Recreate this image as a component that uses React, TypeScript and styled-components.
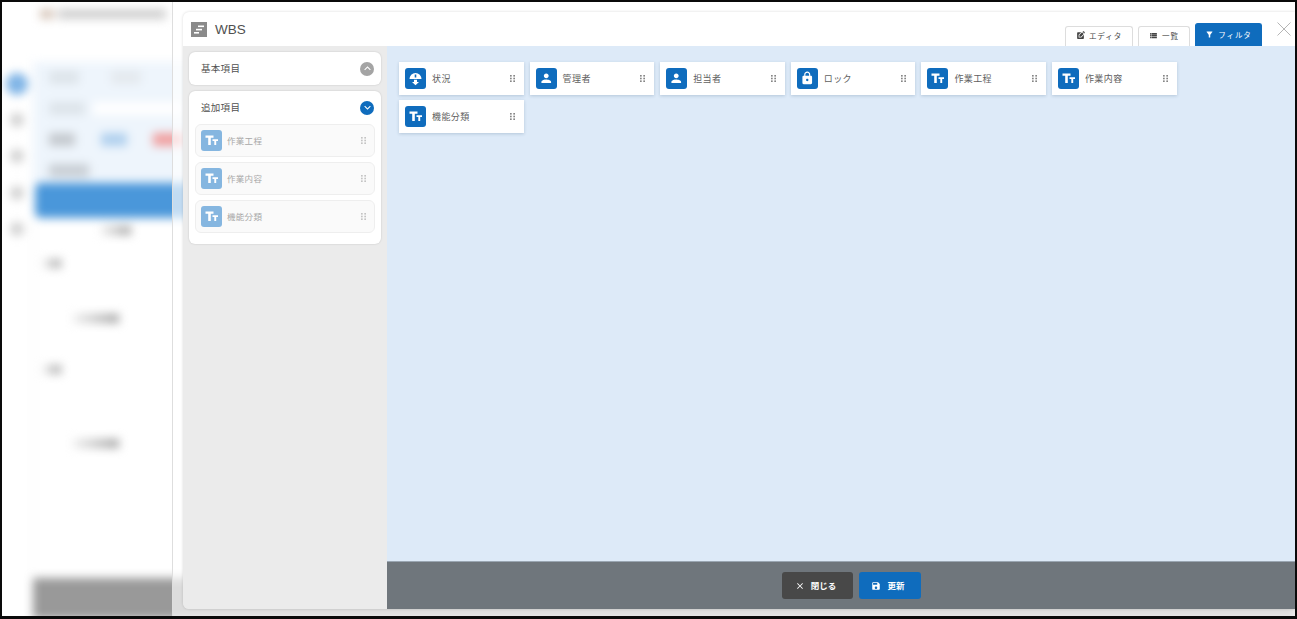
import React from "react";
import styled, { createGlobalStyle } from "styled-components";
import {
  MdPerson,
  MdLock,
  MdKeyboardArrowUp,
  MdKeyboardArrowDown,
  MdFilterAlt,
  MdClose,
  MdSave,
  MdEditSquare,
  MdViewList,
} from "react-icons/md";

const Global = createGlobalStyle`
  html, body { margin: 0; padding: 0; background: #fff; }
  body { font-family: "Noto Sans CJK JP", "Noto Sans", sans-serif; }
  * { box-sizing: border-box; }
`;

const Frame = styled.div`
  position: relative;
  width: 1297px;
  height: 619px;
  overflow: hidden;
  background: #fff;
  &::after {
    content: "";
    position: absolute;
    inset: 0;
    border: 2px solid #0a0a0a;
    border-bottom-width: 3px;
    pointer-events: none;
  }
`;

/* blurred page behind the drawer */
const Backdrop = styled.div`
  display: flex;
  height: 100%;
  filter: blur(5px);
`;

const Rail = styled.div`
  width: 33px;
  flex: none;
  display: flex;
  flex-direction: column;
  align-items: center;
  gap: 22.5px;
  padding-top: 73px;
`;

const RailDot = styled.div<{ $active?: boolean }>`
  width: ${({ $active }) => ($active ? "22px" : "14px")};
  height: ${({ $active }) => ($active ? "22px" : "14px")};
  margin-bottom: ${({ $active }) => ($active ? "-5px" : "0")};
  border-radius: 50%;
  background: ${({ $active }) => ($active ? "#7fb4e6" : "#d0d0d0")};
`;

const PageMain = styled.div`
  flex: 1;
  display: flex;
  flex-direction: column;
`;

const PageTitle = styled.div`
  height: 62px;
  padding: 9px 0 0 7px;
  display: flex;
  gap: 4px;
`;

const TitleBlob = styled.div<{ $w: number; $c: string }>`
  width: ${({ $w }) => $w}px;
  height: 10px;
  background: ${({ $c }) => $c};
`;

const FilterArea = styled.div`
  height: 121px;
  background: #eef5fc;
  display: flex;
  flex-direction: column;
  gap: 18px;
  padding: 9px 0 0 16px;
`;

const BlobRow = styled.div<{ $gap: number }>`
  display: flex;
  gap: ${({ $gap }) => $gap}px;
  align-items: center;
`;

const Blob = styled.div<{ $w: number; $c: string }>`
  width: ${({ $w }) => $w}px;
  height: 13px;
  flex: none;
  background: ${({ $c }) => $c};
`;

const TableHead = styled.div`
  height: 35px;
  margin-left: 2px;
  background: #4a97da;
  border-radius: 5px 0 0 5px;
`;

const TableBody = styled.div`
  flex: 1;
  display: flex;
  flex-direction: column;
  padding-left: 7px;
  border-left: 1px solid #f0f0f0;
`;

const CellBlob = styled.div<{ $top: number; $x: number; $w: number }>`
  width: ${({ $w }) => $w}px;
  height: 9px;
  margin-top: ${({ $top }) => $top}px;
  margin-left: ${({ $x }) => $x}px;
  background: linear-gradient(90deg, #f0f0f0, #a0a0a0);
`;

const PageFooter = styled.div`
  height: 41px;
  background: #999;
`;

const Drawer = styled.div`
  position: absolute;
  top: 0;
  right: 0;
  bottom: 0;
  left: 172px;
  padding: 12px 2px 10px 10px;
  background: rgba(255, 255, 255, 0.66);
  border-left: 1px solid #dedede;
`;

const Modal = styled.div`
  height: 100%;
  display: flex;
  flex-direction: column;
  border-radius: 6px 0 0 6px;
  overflow: hidden;
  background: #ebebeb;
  box-shadow: 0 0 3px rgba(0, 0, 0, 0.15);
`;

const Header = styled.header`
  height: 34px;
  flex: none;
  position: relative;
  display: flex;
  align-items: center;
  padding-left: 8px;
  background: #fff;
`;

const HeaderIcon = styled.svg`
  width: 16px;
  height: 15px;
  margin-right: 8px;
`;

const Title = styled.h1`
  margin: 0;
  font: 400 13.5px "Liberation Sans", sans-serif;
  color: #505050;
`;

const Tabs = styled.div`
  margin-left: auto;
  align-self: flex-end;
  display: flex;
  align-items: flex-end;
  gap: 5px;
  margin-right: 33px;
`;

const Tab = styled.div<{ $active?: boolean; $w: number }>`
  width: ${({ $w }) => $w}px;
  height: ${({ $active }) => ($active ? "23px" : "20px")};
  display: flex;
  align-items: center;
  justify-content: center;
  gap: 4px;
  padding-bottom: 2px;
  font-size: 7.5px;
  letter-spacing: 0.9px;
  border-radius: 3px 3px 0 0;
  color: ${({ $active }) => ($active ? "#fff" : "#444")};
  background: ${({ $active }) => ($active ? "#0f6cbd" : "#fff")};
  border: 1px solid ${({ $active }) => ($active ? "#0f6cbd" : "#ddd")};
  border-bottom: none;
  svg {
    font-size: 9px;
  }
`;

const CloseButton = styled.svg`
  position: absolute;
  top: 10px;
  right: 4px;
  width: 14px;
  height: 14px;
`;

const Body = styled.div`
  flex: 1;
  display: flex;
  min-height: 0;
`;

const Side = styled.aside`
  width: 204px;
  flex: none;
  display: flex;
  flex-direction: column;
  gap: 6px;
  padding: 6px 6px 0;
  background: #ebebeb;
`;

const Card = styled.section`
  background: #fff;
  border-radius: 6px;
  box-shadow: 0 0 2px rgba(0, 0, 0, 0.18);
`;

const CardHead = styled.div`
  height: 33px;
  display: flex;
  align-items: center;
  justify-content: space-between;
  padding: 0 7px 0 12px;
  font-size: 9.5px;
  letter-spacing: 0.3px;
  color: #505050;
`;

const Label = styled.span<{ $lift?: number }>`
  margin-top: ${({ $lift }) => -($lift ?? 2)}px;
`;

const Toggle = styled.span<{ $open?: boolean }>`
  width: 14px;
  height: 14px;
  border-radius: 50%;
  display: flex;
  align-items: center;
  justify-content: center;
  color: #fff;
  font-size: 13px;
  background: ${({ $open }) => ($open ? "#0f6cbd" : "#a4a4a4")};
`;

const SideList = styled.div`
  display: flex;
  flex-direction: column;
  gap: 5px;
  padding: 0 6px 11px;
`;

const SideItem = styled.div`
  height: 33px;
  display: flex;
  align-items: center;
  gap: 5px;
  padding: 0 5px;
  background: #fafafa;
  border: 1px solid #eeeeee;
  border-radius: 6px;
  font-size: 8.5px;
  letter-spacing: 0.3px;
  color: #a8a8a8;
`;

const IconBox = styled.span<{ $muted?: boolean }>`
  width: 21px;
  height: 21px;
  flex: none;
  display: flex;
  align-items: center;
  justify-content: center;
  border-radius: 3px;
  color: #fff;
  font-size: 14.5px;
  background: ${({ $muted }) => ($muted ? "#85b6e0" : "#0f6cbd")};
`;

const GlyphSvg = styled.svg`
  width: 21px;
  height: 21px;
  fill: #fff;
`;

const Handle = styled.svg<{ $muted?: boolean }>`
  width: 5px;
  height: 7px;
  flex: none;
  margin-left: auto;
  margin-right: 3px;
  fill: ${({ $muted }) => ($muted ? "#c4c4c4" : "#858585")};
`;

const Content = styled.main`
  flex: 1;
  display: flex;
  flex-direction: column;
  min-width: 0;
`;

const Canvas = styled.div`
  flex: 1;
  display: flex;
  flex-wrap: wrap;
  align-content: flex-start;
  gap: 5px 6px;
  padding: 16px 12px;
  background: #ddeaf8;
`;

const Field = styled.div`
  width: 124.6px;
  height: 33px;
  display: flex;
  align-items: center;
  gap: 6px;
  padding: 0 6px;
  background: #fff;
  box-shadow: 0 1px 3px rgba(90, 120, 150, 0.3);
  font-size: 9px;
  letter-spacing: 0.4px;
  color: #606060;
`;

const Footer = styled.footer`
  height: 48px;
  flex: none;
  display: flex;
  align-items: center;
  justify-content: center;
  gap: 6px;
  padding-left: 21px;
  background: #6f767c;
  border-top: 1px solid #9aa6b2;
`;

const Button = styled.button<{ $primary?: boolean; $w: number }>`
  width: ${({ $w }) => $w}px;
  height: 27px;
  display: flex;
  align-items: center;
  justify-content: center;
  gap: 6px;
  padding: 0 4px 0 0;
  border: none;
  border-radius: 3px;
  font-family: inherit;
  font-size: 8.5px;
  font-weight: 700;
  color: #fff;
  background: ${({ $primary }) => ($primary ? "#0f6cbd" : "#484848")};
  svg {
    font-size: 10px;
  }
`;

const DragDots = ({ muted }: { muted?: boolean }) => (
  <Handle $muted={muted} viewBox="0 0 5 7">
    {[0, 2.7, 5.4].map((y) =>
      [0, 3.3].map((x) => <rect key={`${x}-${y}`} x={x} y={y} width="1.7" height="1.6" />)
    )}
  </Handle>
);

const TextIcon = () => (
  <GlyphSvg viewBox="0 0 21 21">
    <path d="M4.5 5.5h8v2.3H9.8V15H7.2V7.8H4.5z" />
    <path d="M11.5 9.3h5.5v1.7h-1.8v4h-1.9v-4h-1.8z" />
  </GlyphSvg>
);

const StatusIcon = () => (
  <GlyphSvg viewBox="0 0 21 21">
    <path d="M4.5 11a6 6 0 0 1 12 0z" />
    <path d="M9 11.8h3v2.2h2l-3.5 3.2L7 14h2z" />
    <path d="M9.7 6.5h1.6v3h-1.6z" fill="#0f6cbd" />
  </GlyphSvg>
);

type Kind = "text" | "person" | "lock" | "status";

const icons: Record<Kind, React.ReactNode> = {
  text: <TextIcon />,
  person: <MdPerson />,
  lock: <MdLock />,
  status: <StatusIcon />,
};

const sideItems = ["作業工程", "作業内容", "機能分類"];

const fields: { label: string; kind: Kind }[] = [
  { label: "状況", kind: "status" },
  { label: "管理者", kind: "person" },
  { label: "担当者", kind: "person" },
  { label: "ロック", kind: "lock" },
  { label: "作業工程", kind: "text" },
  { label: "作業内容", kind: "text" },
  { label: "機能分類", kind: "text" },
];

export default function App() {
  return (
    <Frame>
      <Global />
      <Backdrop>
        <Rail>
          <RailDot $active />
          <RailDot />
          <RailDot />
          <RailDot />
          <RailDot />
        </Rail>
        <PageMain>
          <PageTitle>
            <TitleBlob $w={14} $c="#d8c8bc" />
            <TitleBlob $w={108} $c="#cfcfcf" />
          </PageTitle>
          <FilterArea>
            <BlobRow $gap={32}>
              <Blob $w={30} $c="#dde4ea" />
              <Blob $w={30} $c="#e4e9ee" />
            </BlobRow>
            <BlobRow $gap={8}>
              <Blob $w={36} $c="#dde4ea" />
              <Blob $w={90} $c="#ffffff" />
            </BlobRow>
            <BlobRow $gap={26}>
              <Blob $w={26} $c="#c4c9ce" />
              <Blob $w={26} $c="#b0d0ee" />
              <Blob $w={30} $c="#f0a0a0" />
            </BlobRow>
            <BlobRow $gap={0}>
              <Blob $w={40} $c="#c8ced4" />
            </BlobRow>
          </FilterArea>
          <TableHead />
          <TableBody>
            <CellBlob $top={8} $x={60} $w={30} />
            <CellBlob $top={24} $x={2} $w={18} />
            <CellBlob $top={46} $x={32} $w={46} />
            <CellBlob $top={42} $x={2} $w={18} />
            <CellBlob $top={65} $x={32} $w={46} />
          </TableBody>
          <PageFooter />
        </PageMain>
      </Backdrop>

      <Drawer>
        <Modal>
          <Header>
            <HeaderIcon viewBox="0 0 16 15">
              <rect width="16" height="15" fill="#8a8a8a" />
              <rect x="7" y="3.5" width="6" height="1.6" fill="#fff" />
              <rect x="5" y="6.8" width="6" height="1.6" fill="#fff" />
              <rect x="3" y="10" width="5" height="1.6" fill="#fff" />
            </HeaderIcon>
            <Title>WBS</Title>
            <Tabs>
              <Tab $w={68}>
                <MdEditSquare />
                エディタ
              </Tab>
              <Tab $w={52}>
                <MdViewList />
                一覧
              </Tab>
              <Tab $w={67} $active>
                <MdFilterAlt />
                フィルタ
              </Tab>
            </Tabs>
            <CloseButton viewBox="0 0 14 14" fill="none" stroke="#b5b5b5" strokeWidth="1">
              <path d="M0.5 0.5 L13.5 13.5 M13.5 0.5 L0.5 13.5" />
            </CloseButton>
          </Header>
          <Body>
            <Side>
              <Card>
                <CardHead>
                  <Label>基本項目</Label>
                  <Toggle>
                    <MdKeyboardArrowUp />
                  </Toggle>
                </CardHead>
              </Card>
              <Card>
                <CardHead>
                  <Label>追加項目</Label>
                  <Toggle $open>
                    <MdKeyboardArrowDown />
                  </Toggle>
                </CardHead>
                <SideList>
                  {sideItems.map((label) => (
                    <SideItem key={label}>
                      <IconBox $muted>{icons.text}</IconBox>
                      <Label>{label}</Label>
                      <DragDots muted />
                    </SideItem>
                  ))}
                </SideList>
              </Card>
            </Side>
            <Content>
              <Canvas>
                {fields.map((f) => (
                  <Field key={f.label}>
                    <IconBox>{icons[f.kind]}</IconBox>
                    <Label $lift={0}>{f.label}</Label>
                    <DragDots />
                  </Field>
                ))}
              </Canvas>
              <Footer>
                <Button $w={71}>
                  <MdClose />
                  <Label>閉じる</Label>
                </Button>
                <Button $w={62} $primary>
                  <MdSave />
                  <Label>更新</Label>
                </Button>
              </Footer>
            </Content>
          </Body>
        </Modal>
      </Drawer>
    </Frame>
  );
}
